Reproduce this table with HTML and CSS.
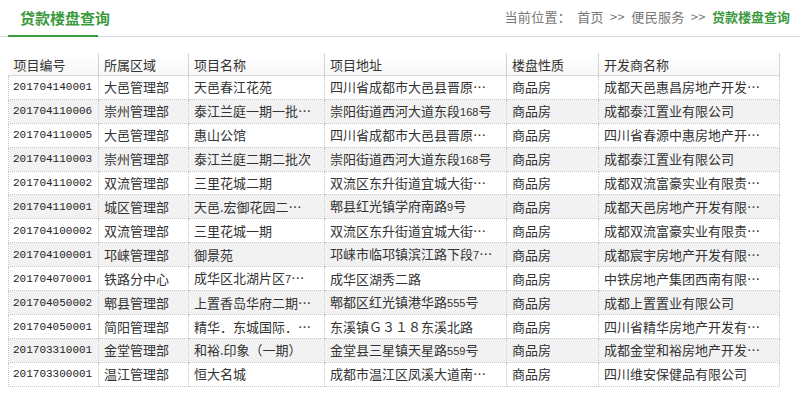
FILE: index.html
```html
<!DOCTYPE html>
<html lang="zh-CN">
<head>
<meta charset="utf-8">
<title>贷款楼盘查询</title>
<link rel="stylesheet" href="styles.css">
</head>
<body>
<div class="page">
  <div class="topbar">
    <div class="title">贷款楼盘查询</div>
    <div class="crumb">当前位置： 首页 &gt;&gt; 便民服务 &gt;&gt; <span class="cur">贷款楼盘查询</span></div>
  </div>
  <table class="grid">
    <colgroup>
      <col class="c1"><col class="c2"><col class="c3"><col class="c4"><col class="c5"><col class="c6">
    </colgroup>
    <thead>
      <tr><th>项目编号</th><th>所属区域</th><th>项目名称</th><th>项目地址</th><th>楼盘性质</th><th>开发商名称</th></tr>
    </thead>
    <tbody>
      <tr><td class="id">201704140001</td><td>大邑管理部</td><td>天邑春江花苑</td><td>四川省成都市大邑县晋原…</td><td>商品房</td><td>成都天邑惠昌房地产开发…</td></tr>
      <tr><td class="id">201704110006</td><td>崇州管理部</td><td>泰江兰庭一期一批…</td><td>崇阳街道西河大道东段<span class="n">168</span>号</td><td>商品房</td><td>成都泰江置业有限公司</td></tr>
      <tr><td class="id">201704110005</td><td>大邑管理部</td><td>惠山公馆</td><td>四川省成都市大邑县晋原…</td><td>商品房</td><td>四川省春源中惠房地产开…</td></tr>
      <tr><td class="id">201704110003</td><td>崇州管理部</td><td>泰江兰庭二期二批次</td><td>崇阳街道西河大道东段<span class="n">168</span>号</td><td>商品房</td><td>成都泰江置业有限公司</td></tr>
      <tr><td class="id">201704110002</td><td>双流管理部</td><td>三里花城二期</td><td>双流区东升街道宜城大街…</td><td>商品房</td><td>成都双流富豪实业有限责…</td></tr>
      <tr><td class="id">201704110001</td><td>城区管理部</td><td>天邑.宏御花园二…</td><td>郫县红光镇学府南路<span class="n">9</span>号</td><td>商品房</td><td>成都天邑房地产开发有限…</td></tr>
      <tr><td class="id">201704100002</td><td>双流管理部</td><td>三里花城一期</td><td>双流区东升街道宜城大街…</td><td>商品房</td><td>成都双流富豪实业有限责…</td></tr>
      <tr><td class="id">201704100001</td><td>邛崃管理部</td><td>御景苑</td><td>邛崃市临邛镇滨江路下段<span class="n">7</span>…</td><td>商品房</td><td>成都宸宇房地产开发有限…</td></tr>
      <tr><td class="id">201704070001</td><td>铁路分中心</td><td>成华区北湖片区<span class="n">7</span>…</td><td>成华区湖秀二路</td><td>商品房</td><td>中铁房地产集团西南有限…</td></tr>
      <tr><td class="id">201704050002</td><td>郫县管理部</td><td>上置香岛华府二期…</td><td>郫都区红光镇港华路<span class="n">555</span>号</td><td>商品房</td><td>成都上置置业有限公司</td></tr>
      <tr><td class="id">201704050001</td><td>简阳管理部</td><td>精华．东城国际．…</td><td>东溪镇Ｇ３１８东溪北路</td><td>商品房</td><td>四川省精华房地产开发有…</td></tr>
      <tr><td class="id">201703310001</td><td>金堂管理部</td><td>和裕.印象（一期）</td><td>金堂县三星镇天星路<span class="n">559</span>号</td><td>商品房</td><td>成都金堂和裕房地产开发…</td></tr>
      <tr><td class="id">201703300001</td><td>温江管理部</td><td>恒大名城</td><td>成都市温江区凤溪大道南…</td><td>商品房</td><td>四川维安保健品有限公司</td></tr>
    </tbody>
  </table>
</div>
</body>
</html>
```
FILE: styles.css
```css
html, body {
  margin: 0;
  padding: 0;
  background: #fff;
}
body {
  font-family: "Noto Sans CJK SC", "Noto Sans", sans-serif;
  color: #333;
  font-size: 13px;
}
.page {
  width: 800px;
}
.topbar {
  display: flex;
  justify-content: space-between;
  align-items: flex-end;
  height: 36px;
  border-bottom: 1px solid #dcdcdc;
  box-sizing: content-box;
}
.title {
  margin-left: 8px;
  padding: 0 12px 0 12px;
  width: 90px;
  height: 36px;
  line-height: 34px;
  font-size: 15px;
  font-weight: bold;
  color: #3c9a3e;
  border-bottom: 2px solid #3c9a3e;
  margin-bottom: -1px;
  box-sizing: border-box;
  white-space: nowrap;
}
.crumb {
  height: 36px;
  line-height: 34px;
  padding-right: 10px;
  color: #777;
  font-size: 13px;
  word-spacing: 3px;
  letter-spacing: 0.3px;
  white-space: nowrap;
}
.crumb .cur {
  color: #3c9a3e;
  font-weight: bold;
  letter-spacing: 0;
}
.grid {
  margin: 16px 0 0 8px;
  border-collapse: collapse;
  table-layout: fixed;
  width: 771px;
}
.c1 { width: 90px; }
.c2 { width: 90px; }
.c3 { width: 136px; }
.c4 { width: 182px; }
.c5 { width: 92px; }
.c6 { width: 181px; }
.grid th {
  height: 22px;
  padding: 0 0 0 5px;
  text-align: left;
  font-weight: normal;
  color: #333;
  background: linear-gradient(#fff, #f7f7f7);
  border-left: 1px solid #d4d4d4;
  border-bottom: 1px solid #d8d8d8;
  white-space: nowrap;
  overflow: hidden;
}
.grid th:first-child {
  border-left: none;
}
.grid th:last-child {
  border-right: 1px solid #d4d4d4;
}
.grid td {
  height: 22.8px;
  padding: 0 0 0 5px;
  border: 1px dotted #c4c4c4;
  white-space: nowrap;
  overflow: hidden;
  line-height: 22px;
}
.grid tbody tr:nth-child(even) td {
  background: #f2f2f2;
}
.grid td.id {
  font-family: "Liberation Mono", "DejaVu Sans Mono", monospace;
  font-size: 11px;
  padding-left: 4px;
  color: #222;
}
.grid .n {
  font-family: "Liberation Sans", sans-serif;
  font-size: 11px;
}
```
